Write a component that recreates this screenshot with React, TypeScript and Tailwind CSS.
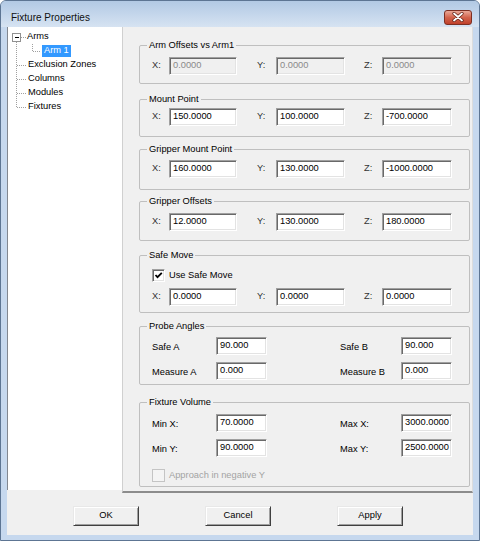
import React from 'react'

// Classic Win32 property dialog: tree on the left, group boxes on the right.

type RowKind = 'root' | 'child' | 'mid' | 'last'

const dot = {
    stroke: '#a0a0a0',
    strokeWidth: 1,
    strokeDasharray: '1 1',
    shapeRendering: 'crispEdges' as const,
}

function TreeLines({ kind }: { kind: RowKind }) {
    if (kind === 'root') {
        return (
            <svg width="19" height="14" className="shrink-0">
                <line x1="13" y1="7.5" x2="18" y2="7.5" {...dot} />
                <line x1="8.5" y1="12" x2="8.5" y2="14" {...dot} />
                <rect x="4.5" y="3.5" width="8" height="8" fill="#fff" stroke="#919191" shapeRendering="crispEdges" />
                <line x1="6.5" y1="7.5" x2="10.5" y2="7.5" stroke="#000" shapeRendering="crispEdges" />
            </svg>
        )
    }
    if (kind === 'child') {
        return (
            <svg width="34" height="14" className="shrink-0">
                <line x1="8.5" y1="0" x2="8.5" y2="14" {...dot} />
                <line x1="24.5" y1="0" x2="24.5" y2="7.5" {...dot} />
                <line x1="24.5" y1="7.5" x2="33" y2="7.5" {...dot} />
            </svg>
        )
    }
    return (
        <svg width="20" height="14" className="shrink-0">
            <line x1="8.5" y1="0" x2="8.5" y2={kind === 'last' ? 7.5 : 14} {...dot} />
            <line x1="8.5" y1="7.5" x2="18" y2="7.5" {...dot} />
        </svg>
    )
}

function TreeRow({ kind, label, selected }: { kind: RowKind; label: string; selected?: boolean }) {
    return (
        <div className="flex items-center h-[14px] leading-none">
            <TreeLines kind={kind} />
            {selected ? (
                <span className="h-[12px] px-[2px] flex items-center bg-[#3399ff] text-white">{label}</span>
            ) : (
                <span className="whitespace-nowrap">{label}</span>
            )}
        </div>
    )
}

function Field({ value, w, disabled }: { value: string; w: string; disabled?: boolean }) {
    return (
        <div
            className={`${w} h-[18px] shrink-0 flex items-center pl-[3px] leading-none border border-t-[#a0a0a0] border-l-[#a0a0a0] border-r-white border-b-white shadow-[inset_1px_1px_0_#696969,inset_-1px_-1px_0_#e3e3e3] ${
                disabled ? 'bg-[#f0f0f0] text-[#8a8a8a]' : 'bg-white text-black'
            }`}
        >
            {value}
        </div>
    )
}

function Check({ label, checked, disabled, className }: { label: string; checked?: boolean; disabled?: boolean; className?: string }) {
    return (
        <div className={`flex items-center h-[13px] pl-[12px] leading-none ${className ?? ''}`}>
            <div
                className={`w-[13px] h-[13px] flex items-center justify-center ${
                    disabled
                        ? 'bg-[#f4f4f4] border border-[#c4c4c4]'
                        : 'bg-white border border-t-[#a0a0a0] border-l-[#a0a0a0] border-r-white border-b-white shadow-[inset_1px_1px_0_#696969,inset_-1px_-1px_0_#e3e3e3]'
                }`}
            >
                {checked && (
                    <svg width="9" height="9" viewBox="0 0 9 9">
                        <path d="M1.5 4 L3.5 6.2 L7.8 1.8" stroke="#000" strokeWidth="1.8" fill="none" />
                    </svg>
                )}
            </div>
            <span className={`ml-[4px] ${disabled ? 'text-[#a3a3a3]' : ''}`}>{label}</span>
        </div>
    )
}

function Group({ title, className, children }: { title: string; className: string; children: React.ReactNode }) {
    return (
        <fieldset className={`border border-[#bfbfbf] rounded-[2px] ${className}`}>
            <legend className="ml-[7px] px-[2px] leading-[11px]">{title}</legend>
            {children}
        </fieldset>
    )
}

function XYZ({ x, y, z, disabled, className }: { x: string; y: string; z: string; disabled?: boolean; className?: string }) {
    return (
        <div className={`flex items-center pl-[12px] leading-none ${className ?? ''}`}>
            <span className="w-[17px] text-[#333]">X:</span>
            <Field value={x} w="w-[68px]" disabled={disabled} />
            <span className="ml-[20px] w-[19px] text-[#333]">Y:</span>
            <Field value={y} w="w-[69px]" disabled={disabled} />
            <span className="ml-[19px] w-[18px] text-[#333]">Z:</span>
            <Field value={z} w="w-[70px]" disabled={disabled} />
        </div>
    )
}

function PairRow({ a, av, b, bv, className }: { a: string; av: string; b: string; bv: string; className?: string }) {
    return (
        <div className={`flex items-center pl-[12px] leading-none ${className ?? ''}`}>
            <span className="w-[64px] mt-[3px]">{a}</span>
            <Field value={av} w="w-[51px]" />
            <span className="ml-[73px] w-[61px] mt-[3px]">{b}</span>
            <Field value={bv} w="w-[51px]" />
        </div>
    )
}

function Button({ label }: { label: string }) {
    return (
        <div className="w-[66px] h-[20px] flex items-center justify-center leading-none bg-[#f0f0f0] border border-t-[#e8e8e8] border-l-[#e8e8e8] border-r-[#404040] border-b-[#404040] shadow-[inset_1px_1px_0_#fff,inset_-1px_-1px_0_#a0a0a0]">
            {label}
        </div>
    )
}

export default function App() {
    return (
        <div className="w-[480px] h-[541px] flex flex-col bg-[#c6d8ee] border border-[#5d7593] rounded-t-[6px] font-['Liberation_Sans',Arial,sans-serif] text-[9.3px] text-black overflow-hidden">
            {/* Title bar */}
            <div className="h-[26px] shrink-0 flex items-center justify-between pt-[6px] pl-[10px] pr-[7px] bg-gradient-to-b from-[#b2c9e4] to-[#d6e3f2]">
                <span className="text-[10px] text-[#111]">Fixture Properties</span>
                <div className="w-[28px] h-[15px] flex items-center justify-center rounded-[3px] border border-[#7d2f22] bg-gradient-to-b from-[#e9a898] via-[#d2634c] to-[#c0402a]">
                    <svg width="12" height="10" viewBox="0 0 12 10">
                        <path d="M2 1.5 L10 8.5 M10 1.5 L2 8.5" stroke="#5a1d12" strokeWidth="3.2" strokeLinecap="round" />
                        <path d="M2 1.5 L10 8.5 M10 1.5 L2 8.5" stroke="#fff" strokeWidth="1.8" strokeLinecap="round" />
                    </svg>
                </div>
            </div>

            {/* Client area */}
            <div className="flex-1 mx-[6px] mb-[5px] bg-[#f0f0f0] flex flex-col">
                <div className="flex items-start">
                    {/* Tree */}
                    <div className="w-[115px] h-[463px] shrink-0 bg-white border-l border-[#828790] pt-[3px]">
                        <TreeRow kind="root" label="Arms" />
                        <TreeRow kind="child" label="Arm 1" selected />
                        <TreeRow kind="mid" label="Exclusion Zones" />
                        <TreeRow kind="mid" label="Columns" />
                        <TreeRow kind="mid" label="Modules" />
                        <TreeRow kind="last" label="Fixtures" />
                    </div>

                    {/* Property page */}
                    <div className="w-[351px] h-[466px] flex flex-col pl-[16px] pr-[2px] pt-[13px] border-l border-[#d0d0d0] border-r border-r-[#dcdcdc] border-b-2 border-b-[#8c8c8c]">
                        <Group title="Arm Offsets vs Arm1" className="h-[44px]">
                            <XYZ x="0.0000" y="0.0000" z="0.0000" disabled className="pt-[6px]" />
                        </Group>

                        <Group title="Mount Point" className="h-[43px] mt-[10px]">
                            <XYZ x="150.0000" y="100.0000" z="-700.0000" className="pt-[3px]" />
                        </Group>

                        <Group title="Gripper Mount Point" className="h-[46px] mt-[7px]">
                            <XYZ x="160.0000" y="130.0000" z="-1000.0000" className="pt-[5px]" />
                        </Group>

                        <Group title="Gripper Offsets" className="h-[45px] mt-[6px]">
                            <XYZ x="12.0000" y="130.0000" z="180.0000" className="pt-[6px]" />
                        </Group>

                        <Group title="Safe Move" className="h-[63px] mt-[9px]">
                            <Check label="Use Safe Move" checked className="mt-[8px]" />
                            <XYZ x="0.0000" y="0.0000" z="0.0000" className="mt-[6px]" />
                        </Group>

                        <Group title="Probe Angles" className="h-[64px] mt-[8px]">
                            <PairRow a="Safe A" av="90.000" b="Safe B" bv="90.000" className="mt-[5px]" />
                            <PairRow a="Measure A" av="0.000" b="Measure B" bv="0.000" className="mt-[7px]" />
                        </Group>

                        <Group title="Fixture Volume" className="h-[90px] mt-[12px]">
                            <PairRow a="Min X:" av="70.0000" b="Max X:" bv="3000.0000" className="mt-[6px]" />
                            <PairRow a="Min Y:" av="90.0000" b="Max Y:" bv="2500.0000" className="mt-[7px]" />
                            <Check label="Approach in negative Y" disabled className="mt-[12px]" />
                        </Group>
                    </div>
                </div>

                {/* Buttons */}
                <div className="flex pl-[66px] pt-[13px] gap-[66px]">
                    <Button label="OK" />
                    <Button label="Cancel" />
                    <Button label="Apply" />
                </div>
            </div>
        </div>
    )
}
